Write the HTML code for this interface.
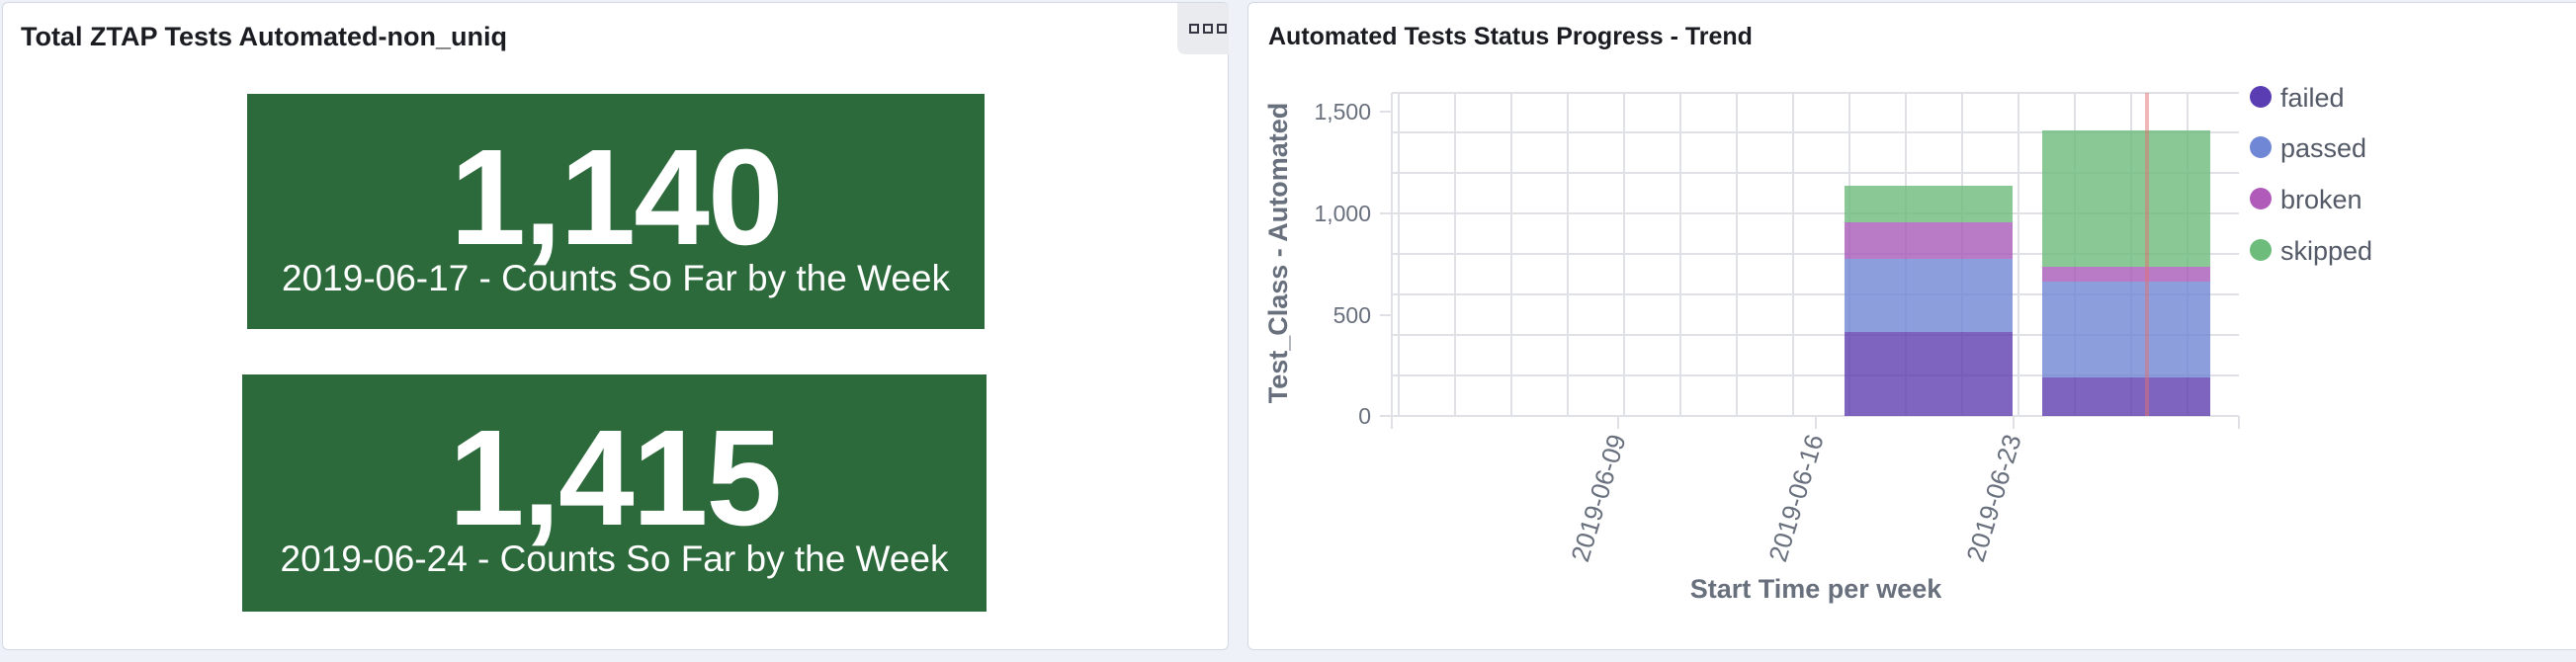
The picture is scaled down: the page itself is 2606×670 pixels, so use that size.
<!DOCTYPE html>
<html><head><meta charset="utf-8"><style>
html,body{margin:0;padding:0;width:2606px;height:670px;background:#eef1f7;overflow:hidden;font-family:"Liberation Sans",sans-serif}
.panel{position:absolute;background:#fff;border:1px solid #d3dae6;border-radius:6px;box-sizing:border-box}
.title{position:absolute;font-weight:bold;color:#1a1c21}
.box{position:absolute;background:#2c6a3c;color:#fff;text-align:center}
.num{position:absolute;left:0;right:0;font-weight:bold;font-size:138px;line-height:1;letter-spacing:-2px}
.sub{position:absolute;left:0;right:0;font-size:37px;line-height:1}
</style></head><body>
<div class="panel" style="left:2px;top:2px;width:1241px;height:656px">
  <div class="title" style="left:18px;top:19px;font-size:27px">Total ZTAP Tests Automated-non_uniq</div>
  <div style="position:absolute;left:1188px;top:0;width:52px;height:52px;background:#e9ebef;border-radius:0 5px 0 8px"></div>
  <div style="position:absolute;left:1200px;top:21px;display:flex;gap:4px"><i style="width:6px;height:6px;border:2px solid #343741;display:block"></i><i style="width:6px;height:6px;border:2px solid #343741;display:block"></i><i style="width:6px;height:6px;border:2px solid #343741;display:block"></i></div>
  <div class="box" style="left:247px;top:92px;width:746px;height:238px">
    <div class="num" style="top:36px">1,140</div>
    <div class="sub" style="top:168px">2019-06-17 - Counts So Far by the Week</div>
  </div>
  <div class="box" style="left:242px;top:376px;width:753px;height:240px">
    <div class="num" style="top:36px">1,415</div>
    <div class="sub" style="top:168px">2019-06-24 - Counts So Far by the Week</div>
  </div>
</div>
<div class="panel" style="left:1262px;top:2px;width:1350px;height:656px">
  <div class="title" style="left:20px;top:20px;font-size:25px">Automated Tests Status Progress - Trend</div>
</div>
<svg style="position:absolute;left:0;top:0" width="2606" height="670">
<g stroke="#dfe1e6" stroke-width="2">
<line x1="1408" y1="94" x2="2265" y2="94"/><line x1="1408" y1="134" x2="2265" y2="134"/><line x1="1408" y1="175" x2="2265" y2="175"/><line x1="1408" y1="216" x2="2265" y2="216"/><line x1="1408" y1="257" x2="2265" y2="257"/><line x1="1408" y1="298" x2="2265" y2="298"/><line x1="1408" y1="339" x2="2265" y2="339"/><line x1="1408" y1="380" x2="2265" y2="380"/>
<line x1="1415" y1="94" x2="1415" y2="421"/><line x1="1472" y1="94" x2="1472" y2="421"/><line x1="1529" y1="94" x2="1529" y2="421"/><line x1="1586" y1="94" x2="1586" y2="421"/><line x1="1643" y1="94" x2="1643" y2="421"/><line x1="1700" y1="94" x2="1700" y2="421"/><line x1="1757" y1="94" x2="1757" y2="421"/><line x1="1814" y1="94" x2="1814" y2="421"/><line x1="1871" y1="94" x2="1871" y2="421"/><line x1="1928" y1="94" x2="1928" y2="421"/><line x1="1985" y1="94" x2="1985" y2="421"/><line x1="2042" y1="94" x2="2042" y2="421"/><line x1="2099" y1="94" x2="2099" y2="421"/><line x1="2156" y1="94" x2="2156" y2="421"/><line x1="2213" y1="94" x2="2213" y2="421"/>
<line x1="1408" y1="94" x2="1408" y2="434"/><line x1="2265" y1="421" x2="2265" y2="434"/>
<line x1="1396" y1="421" x2="2265" y2="421"/>
<line x1="1396" y1="113" x2="1408" y2="113"/><line x1="1396" y1="216" x2="1408" y2="216"/><line x1="1396" y1="319" x2="1408" y2="319"/>
<line x1="1637" y1="421" x2="1637" y2="434"/><line x1="1837" y1="421" x2="1837" y2="434"/><line x1="2037" y1="421" x2="2037" y2="434"/>
</g>
<g opacity="0.8">
<rect x="1866" y="188" width="170" height="37" fill="#6dbc7c"/>
<rect x="1866" y="225" width="170" height="37" fill="#a95bb8"/>
<rect x="1866" y="262" width="170" height="74" fill="#7186d4"/>
<rect x="1866" y="336" width="170" height="85" fill="#5f3eb0"/>
<rect x="2066" y="132" width="170" height="138" fill="#6dbc7c"/>
<rect x="2066" y="270" width="170" height="15" fill="#a95bb8"/>
<rect x="2066" y="285" width="170" height="97" fill="#7186d4"/>
<rect x="2066" y="382" width="170" height="39" fill="#5f3eb0"/>
</g>
<rect x="2170" y="94" width="4" height="327" fill="#e07070" opacity="0.5"/>
<g font-size="23" fill="#69707d" text-anchor="end">
<text x="1387" y="121">1,500</text><text x="1387" y="224">1,000</text><text x="1387" y="327">500</text><text x="1387" y="429">0</text>
</g>
<g font-size="26" fill="#69707d" text-anchor="end">
<text transform="translate(1645,443) rotate(-73)">2019-06-09</text>
<text transform="translate(1845,443) rotate(-73)">2019-06-16</text>
<text transform="translate(2045,443) rotate(-73)">2019-06-23</text>
</g>
<text x="1837" y="605" text-anchor="middle" font-size="27" font-weight="bold" fill="#69707d">Start Time per week</text>
<text transform="translate(1302,256) rotate(-90)" text-anchor="middle" font-size="27" font-weight="bold" fill="#69707d">Test_Class - Automated</text>
<g font-size="27" fill="#535966">
<circle cx="2287" cy="98" r="11" fill="#5a3db3"/><text x="2307" y="108">failed</text>
<circle cx="2287" cy="149" r="11" fill="#6f87d5"/><text x="2307" y="159">passed</text>
<circle cx="2287" cy="201" r="11" fill="#b05ab9"/><text x="2307" y="211">broken</text>
<circle cx="2287" cy="253" r="11" fill="#6dbc7c"/><text x="2307" y="263">skipped</text>
</g>
</svg>
</body></html>
